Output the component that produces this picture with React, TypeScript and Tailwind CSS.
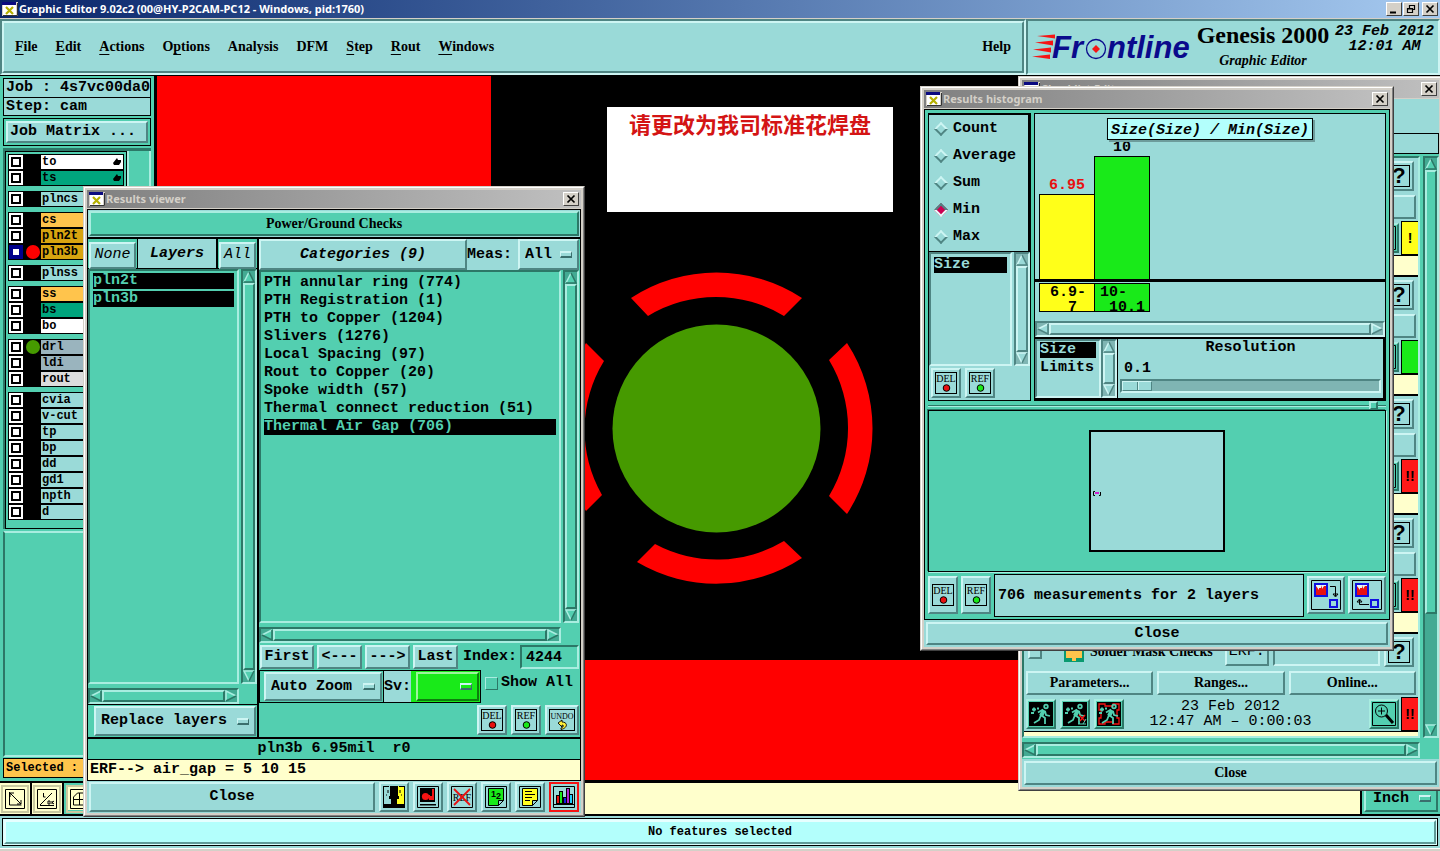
import React from "react";

const MONO = "font-['Liberation_Mono',monospace] font-bold text-[15px] leading-[18px]";
const MONO_SM = "font-['Liberation_Mono',monospace] font-bold text-xs leading-[14px]";
const SERIF = "font-['Liberation_Serif',serif] font-bold text-sm leading-[18px]";

const AQUA_UP = "bg-[#9adad8] border-2 border-t-[#cdf5f3] border-l-[#cdf5f3] border-r-[#4f8583] border-b-[#4f8583]";
const AQUA_IN = "bg-[#9adad8] border-2 border-t-[#4f8583] border-l-[#4f8583] border-r-[#cdf5f3] border-b-[#cdf5f3]";
const TEAL_UP = "bg-[#53cfb0] border-2 border-t-[#a9ede0] border-l-[#a9ede0] border-r-[#2c7867] border-b-[#2c7867]";
const TEAL_IN = "bg-[#53cfb0] border-2 border-t-[#2c7867] border-l-[#2c7867] border-r-[#a9ede0] border-b-[#a9ede0]";
const GREEN_UP = "bg-[#19ea19] border-2 border-t-[#9df59d] border-l-[#9df59d] border-r-[#0d7f0d] border-b-[#0d7f0d]";

type Tone = "aqua" | "teal";
type Dir = "up" | "down" | "left" | "right";

function Arrow({ dir, tone }: { dir: Dir; tone: Tone }) {
  const hi = tone === "aqua" ? "#cdf5f3" : "#a9ede0";
  const lo = tone === "aqua" ? "#4f8583" : "#2c7867";
  const fill = tone === "aqua" ? "#9adad8" : "#53cfb0";
  const lines = {
    up: ["6,1 1,11", "6,1 11,11 1,11", "6,1 11,11 1,11"],
    down: ["11,1 1,1 6,11", "11,1 6,11", "1,1 11,1 6,11"],
    left: ["11,1 1,6", "1,6 11,11 11,1", "11,1 11,11 1,6"],
    right: ["1,11 1,1 11,6", "1,11 11,6", "1,1 11,6 1,11"],
  }[dir];
  return (
    <svg viewBox="0 0 12 12" className="size-3 shrink-0" aria-hidden="true">
      <polygon points={lines[2]} fill={fill} />
      <polyline points={lines[0]} fill="none" stroke={hi} strokeWidth="1.6" />
      <polyline points={lines[1]} fill="none" stroke={lo} strokeWidth="1.6" />
    </svg>
  );
}

function Scroll({ axis, tone, rest = false }: { axis: "x" | "y"; tone: Tone; rest?: boolean }) {
  const shell = tone === "aqua" ? AQUA_IN : TEAL_IN;
  const thumb = tone === "aqua" ? AQUA_UP : TEAL_UP;
  const trough = tone === "aqua" ? "bg-[#7fb5b3]" : "bg-[#43aa93]";
  const dir = axis === "y" ? "w-4 flex-col" : "h-4 flex-row";
  return (
    <div className={`flex shrink-0 ${dir} ${shell}`} aria-hidden="true">
      <div className={`flex min-h-0 min-w-0 flex-1 ${axis === "y" ? "flex-col" : "flex-row"} ${trough}`}>
        <Arrow dir={axis === "y" ? "up" : "left"} tone={tone} />
        <div className={`${rest ? "flex-[4]" : "flex-1"} ${thumb}`} />
        {rest && <div className="flex-1" />}
        <Arrow dir={axis === "y" ? "down" : "right"} tone={tone} />
      </div>
    </div>
  );
}

function AppIcon() {
  return (
    <svg viewBox="0 0 16 14" className="h-3.5 w-4 shrink-0" aria-hidden="true">
      <rect width="16" height="14" fill="#d4d0c8" />
      <rect x="1" y="3" width="13" height="10" fill="#fff" />
      <rect x="0" y="0" width="14" height="3" fill="#0a0a80" />
      <path d="M15.500 1V13.500H1" fill="none" stroke="#333" />
      <path d="M4 5l7 7M11 5l-7 7" stroke="#b5b000" strokeWidth="2.200" />
    </svg>
  );
}

function CaptionButton({ label, kind }: { label: string; kind: "close" | "min" | "restore" }) {
  return (
    <button
      aria-label={label}
      className="flex h-3.5 w-4 items-center justify-center border border-t-white border-l-white border-r-[#404040] border-b-[#404040] bg-[#d4d0c8]"
    >
      <svg viewBox="0 0 12 10" className="h-2.5 w-3" fill="none" stroke="#000">
        {kind === "close" && <path d="M2.500 1.500l7 7M9.500 1.500l-7 7" strokeWidth="1.700" />}
        {kind === "min" && <path d="M2 8.500h6" strokeWidth="2" />}
        {kind === "restore" && <path d="M4.500 4V1.500h5v4H8M4.500 1.500h5M2.500 4.500h5v4h-5zM2.500 5h5" strokeWidth="1.200" />}
      </svg>
    </button>
  );
}

function Frame({ title, className, children }: { title: string; className: string; children: React.ReactNode }) {
  return (
    <section
      className={`absolute flex flex-col border border-t-[#d4d0c8] border-l-[#d4d0c8] border-r-[#404040] border-b-[#404040] ${className}`}
    >
      <div className="flex min-h-0 flex-1 flex-col border border-t-white border-l-white border-r-[#808080] border-b-[#808080] bg-[#d4d0c8] p-0.5">
        <header className="mb-px flex h-[18px] shrink-0 items-center gap-px bg-linear-to-r from-[#808080] to-[#c0c0c0] px-0.5">
          <AppIcon />
          <h2 className="flex-1 font-['Noto_Sans',sans-serif] text-[11px] leading-4 font-bold text-[#d4d0c8]">{title}</h2>
          <CaptionButton label={"Close " + title} kind="close" />
        </header>
        {children}
      </div>
    </section>
  );
}

function OptionMenu({ label, value, bevel = AQUA_UP, className = "" }: { label: string; value: string; bevel?: string; className?: string }) {
  return (
    <span className={`grid items-center ${bevel} ${className}`}>
      <select aria-label={label} className={`col-start-1 row-start-1 w-full appearance-none bg-transparent pl-[5px] outline-none ${MONO}`}>
        <option>{value}</option>
      </select>
      <span className="pointer-events-none col-start-1 row-start-1 mr-[5px] h-[7px] w-3 justify-self-end border-t-2 border-r border-b-2 border-l border-t-[#cdf5f3] border-l-[#cdf5f3] border-r-[#3a6f6d] border-b-[#3a6f6d]" />
    </span>
  );
}

function TagIcon({ text, dot }: { text: string; dot?: string }) {
  const w = text.length > 3 ? 26 : 22;
  return (
    <svg viewBox={`0 0 ${w} 22`} width={w} height="22" className="shrink-0">
      <rect x="0.500" y="0.500" width={w - 1} height="21" fill="none" stroke="#000" />
      <text x={w / 2} y="10" textAnchor="middle" fontFamily="Liberation Serif, serif" fontSize={text.length > 3 ? 8 : 10}>
        {text}
      </text>
      {dot ? (
        <circle cx="11.500" cy="16" r="3.300" fill={dot} stroke="#000" />
      ) : (
        <path d="M9 14l4-3v2c6 0 6 6-1 7.500v-1.500c3-1 3-3 1-3v2z" fill="#ffef3a" stroke="#000" strokeWidth="0.900" />
      )}
    </svg>
  );
}

function IconButton({ label, bevel = AQUA_UP, size = "size-[30px]", children }: { label: string; bevel?: string; size?: string; children: React.ReactNode }) {
  return (
    <button aria-label={label} className={`flex shrink-0 items-center justify-center ${size} ${bevel}`}>
      {children}
    </button>
  );
}

/* ---------- main window ---------- */

const menus: [string, string, string][] = [
  ["", "F", "ile"],
  ["", "E", "dit"],
  ["", "A", "ctions"],
  ["O", "p", "tions"],
  ["Analysis", "", ""],
  ["DFM", "", ""],
  ["", "S", "tep"],
  ["", "R", "out"],
  ["", "W", "indows"],
];

function FrontlineLogo() {
  return (
    <svg viewBox="0 -10 164 48" className="h-12 w-[164px] shrink-0" role="img" aria-label="Frontline">
      <g fill="#f51414">
        <path d="M5 5l18-1.500v4zM3 11.500l18-2v5zM1 18.500l18-2v5zM0 25.500l18-2v4.500z" />
      </g>
      <g fontFamily="Liberation Sans, sans-serif" fontWeight="bold" fontStyle="italic" fontSize="31" fill="#0a0a8c">
        <text x="20" y="27">Fr</text>
        <text x="75" y="27">ntline</text>
      </g>
      <circle cx="64" cy="18" r="9.500" fill="#9adad8" stroke="#0a0a8c" strokeWidth="1.300" />
      <path d="M64 14l4 4-4 4-4-4z" fill="#f51414" />
    </svg>
  );
}

function MenuBar() {
  return (
    <div className="flex h-14 shrink-0 bg-[#9adad8]">
      <div className={`flex min-w-0 flex-1 ${AQUA_IN}`}>
        <nav className={`flex flex-1 items-center gap-[18px] px-[11px] ${AQUA_UP} ${SERIF}`}>
          {menus.map(([a, u, b]) => (
            <button key={a + u + b}>
              {a}
              {u && <span className="underline underline-offset-3">{u}</span>}
              {b}
            </button>
          ))}
          <span className="flex-1" />
          <button>Help</button>
        </nav>
      </div>
      <div className={`flex w-[414px] shrink-0 items-start pl-1 pr-px ${AQUA_IN}`}>
        <div className="flex w-[162px]">
          <FrontlineLogo />
        </div>
        <div className="flex w-[138px] flex-col items-center font-['Liberation_Serif',serif] font-bold">
          <h1 className="text-2xl leading-7">Genesis 2000</h1>
          <p className="mt-1 text-sm leading-4 italic">Graphic Editor</p>
        </div>
        <div className={`flex-1 pt-[3px] text-center italic ${MONO}`}>
          <p className="leading-[15px] whitespace-nowrap">23 Feb 2012</p>
          <p className="leading-[15px]">12:01 AM</p>
        </div>
      </div>
    </div>
  );
}

type Layer = { name: string; bg: string; dot?: string; on?: boolean; hand?: boolean };
const A = "bg-[#9adad8]";
const layerGroups: Layer[][] = [
  [
    { name: "to", bg: "bg-white", hand: true },
    { name: "ts", bg: "bg-[#00a57d]", hand: true },
  ],
  [{ name: "plncs", bg: A }],
  [
    { name: "cs", bg: "bg-[#ffc44c]" },
    { name: "pln2t", bg: "bg-[#d8a410]" },
    { name: "pln3b", bg: "bg-[#d8a410]", dot: "bg-[#ff0000]", on: true },
  ],
  [{ name: "plnss", bg: A }],
  [
    { name: "ss", bg: "bg-[#ffc44c]" },
    { name: "bs", bg: "bg-[#00a57d]" },
    { name: "bo", bg: "bg-white" },
  ],
  [
    { name: "drl", bg: "bg-[#9ab4be]", dot: "bg-[#469a00]" },
    { name: "ldi", bg: "bg-[#9ab4be]" },
    { name: "rout", bg: "bg-[#dcdcdc]" },
  ],
  ["cvia", "v-cut", "tp", "bp", "dd", "gd1", "npth", "d"].map((name) => ({ name, bg: A })),
];

function LayerRow({ layer }: { layer: Layer }) {
  return (
    <label className="flex h-4 items-center bg-black">
      <input
        type="checkbox"
        className={`m-px size-3.5 shrink-0 appearance-none border-2 bg-white outline-2 -outline-offset-4 ${
          layer.on ? "border-[#00008c] outline-[#00008c]" : "border-white outline-black"
        }`}
      />
      <span className="flex w-[17px] shrink-0 justify-center">
        {layer.dot && <span className={`size-3.5 shrink-0 rounded-full ${layer.dot}`} />}
      </span>
      <span className={`mr-px flex h-3.5 flex-1 items-center justify-between pl-px pr-0.5 ${layer.bg} ${MONO_SM}`}>
        {layer.name}
        {layer.hand && (
          <svg viewBox="0 0 8 8" className="size-2" aria-hidden="true">
            <path d="M0 5l4-5 1 2h3v2l-2 3H1z" fill="#000" />
          </svg>
        )}
      </span>
    </label>
  );
}

function LeftPanel() {
  return (
    <aside className="flex w-[156px] shrink-0 flex-col border-r-2 border-black bg-[#53cfb0] px-[3px] pt-0.5">
      <p className={`h-5 border border-black ${A} pl-0.5 whitespace-nowrap ${MONO}`}>Job : 4s7vc00da0</p>
      <p className={`-mt-px h-[19px] border border-black ${A} pl-0.5 ${MONO}`}>Step: cam</p>
      <div className="mt-0.5 h-7 border border-black p-[2px]">
        <button className={`flex h-full w-full items-center pl-0.5 ${AQUA_UP} ${MONO}`}>Job Matrix ...</button>
      </div>
      <div className="mt-0.5 flex border-t-[3px] border-l-2 border-[#2c7867]">
        <div className="flex w-[122px] flex-col gap-[5px] border border-black p-0.5 pb-2">
          {layerGroups.map((g) => (
            <div key={g[0].name} className="flex flex-col">
              {g.map((l) => (
                <LayerRow key={l.name} layer={l} />
              ))}
            </div>
          ))}
        </div>
        <div className="flex-1 border-x-2 border-[#a9ede0]" />
      </div>
      <div className="mt-0.5 flex-1 border-y-2 border-l-2 border-t-[#a9ede0] border-l-[#2c7867] border-b-[#a9ede0]" />
      <p className={`mt-px mb-[3px] flex h-5 items-center border border-black bg-[#ffc44c] pl-0.5 ${MONO_SM}`}>Selected :</p>
    </aside>
  );
}

function Canvas() {
  return (
    <main className="relative min-w-0 flex-1 overflow-hidden bg-black">
      <svg viewBox="156 76 1284 705" width="1284" height="705" className="block max-w-none" role="img" aria-label="Thermal pad">
        <path d="M157 76H491V400H157zM157 660H1440V780H157z" fill="#ff0000" />
        <g fill="#ff0000">
          <path d="M631 298A156 156 0 0 1 802 298L784 316A131 131 0 0 0 648 316z" />
          <path d="M847 343A156 156 0 0 1 847 514L829 496A131 131 0 0 0 829 360z" />
          <path d="M802 558A156 156 0 0 1 637 562L655 544A131 131 0 0 0 784 541z" />
          <path d="M586 343L604 361A131 131 0 0 0 602 495L586 511A156 156 0 0 1 586 343z" />
        </g>
        <circle cx="716.500" cy="428.500" r="104" fill="#469a00" />
      </svg>
      <p className="absolute top-[31px] left-[451px] h-[105px] w-[286px] bg-white pt-0.5 pl-[22px] font-['Noto_Sans_CJK_SC',sans-serif] text-[22px] leading-7 font-bold whitespace-nowrap text-[#d41414]">
        请更改为我司标准花焊盘
      </p>
    </main>
  );
}

function ToolRow() {
  const tool = "flex h-full w-8 shrink-0 items-center justify-center border-r-2 border-black bg-[#ffffcc]";
  const svg = { viewBox: "0 0 20 20", className: "size-5 outline-2 outline-offset-2 outline-[#c9c9a0]", fill: "none", stroke: "#000" };
  return (
    <div className="flex h-[35px] shrink-0 border-y-2 border-black bg-[#ffffcc]">
      <button aria-label="Scale" className={tool}>
        <svg {...svg}>
          <path d="M0.500 0.500h19v19h-19zM4.500 3v13h12M5 4l11 11M5 8V4h4M16 11v4h-4" />
        </svg>
      </button>
      <button aria-label="Angle" className={tool}>
        <svg {...svg}>
          <path d="M0.500 0.500h19v19h-19zM3 16.500h14M3 16L15 4M6.500 4v4h2M11 12h2v3h-2zM15 12v3M17 12l-2 1.500 2 1.500" />
        </svg>
      </button>
      <button aria-label="Grid" className="flex h-full w-8 shrink-0 items-center justify-center border-4 border-[#53cfb0] bg-[#ffffcc]">
        <svg {...svg}>
          <path d="M0.500 0.500h19v19h-19zM3.500 8l4-4h9v12h-13zM9.500 4v12M3 10.500h14" />
        </svg>
      </button>
      <span className="flex-1" />
      <div className="w-[80px] border-l-2 border-black bg-[#53cfb0] p-0.5">
        <OptionMenu label="Units" value="Inch" bevel={TEAL_UP} className="h-[27px] pl-0.5" />
      </div>
    </div>
  );
}

/* ---------- results viewer ---------- */

const categories = [
  "PTH annular ring (774)",
  "PTH Registration (1)",
  "PTH to Copper (1204)",
  "Slivers (1276)",
  "Local Spacing (97)",
  "Rout to Copper (20)",
  "Spoke width (57)",
  "Thermal connect reduction (51)",
  "Thermal Air Gap (706)",
];

function Option({ text, selected, ink = "text-[#53cfb0]" }: { text: string; selected: boolean; ink?: string }) {
  return (
    <button
      role="option"
      aria-selected={selected}
      className={`mb-0.5 block h-4 w-full text-left whitespace-nowrap ${MONO} ${selected ? `bg-black ${ink}` : ""}`}
    >
      <span className="block leading-4">{text}</span>
    </button>
  );
}

function ResultsViewer() {
  const nav = `h-6 ${AQUA_UP} ${MONO}`;
  const header = `h-full w-full italic ${AQUA_UP} font-['Liberation_Mono',monospace] text-[15px] leading-[18px]`;
  return (
    <Frame title="Results viewer" className="top-[186px] left-[83px] h-[631px] w-[502px]">
      <div className="flex min-h-0 flex-1 flex-col border-x border-t border-black bg-[#53cfb0]">
        <div className="h-[29px] border-b-2 border-black bg-[#9adad8] p-px">
          <h3 className={`flex h-full items-center justify-center ${TEAL_UP} ${SERIF}`}>Power/Ground Checks</h3>
        </div>
        <div className="flex min-h-0 flex-1 border-b-2 border-black">
          <div className="flex w-[171px] shrink-0 flex-col border-r-2 border-black">
            <div className="flex h-[30px] shrink-0 border-b border-black">
              <span className="w-[50px] border-r border-black p-px">
                <button className={header}>None</button>
              </span>
              <span className={`flex flex-1 items-center justify-center italic ${A} ${MONO}`}>Layers</span>
              <span className="w-[41px] border-l-2 border-black p-px">
                <button className={header}>All</button>
              </span>
            </div>
            <div className="mb-1 flex min-h-0 flex-1 gap-0.5">
              <div role="listbox" aria-label="Layers" className={`flex-1 px-[3px] pt-0.5 ${TEAL_IN}`}>
                <Option text="pln2t" selected />
                <Option text="pln3b" selected />
              </div>
              <Scroll axis="y" tone="teal" />
            </div>
            <div className="mr-[18px] grid">
              <Scroll axis="x" tone="teal" />
            </div>
            <div className="h-[33px] shrink-0 border-t border-black p-px pl-1.5">
              <OptionMenu label="Layer mode" value="Replace layers" className="h-[30px]" />
            </div>
          </div>
          <div className="flex min-w-0 flex-1 flex-col pr-px">
            <div className="flex h-[31px] shrink-0 bg-[#9adad8]">
              <button className={`w-[208px] shrink-0 italic ${AQUA_UP} ${MONO}`}>Categories (9)</button>
              <span className={`flex flex-1 items-center ${MONO}`}>Meas:</span>
              <OptionMenu label="Measurements" value="All" className="w-[61px]" />
            </div>
            <div className="mb-1 flex min-h-0 flex-1 gap-0.5">
              <div role="listbox" aria-label="Categories" className={`min-w-0 flex-1 px-[3px] pt-[3px] ${TEAL_IN}`}>
                {categories.map((c, i) => (
                  <Option key={c} text={c} selected={i === 8} />
                ))}
              </div>
              <Scroll axis="y" tone="teal" />
            </div>
            <div className="mr-[18px] grid">
              <Scroll axis="x" tone="teal" />
            </div>
            <div className="mt-px flex h-[26px] shrink-0 items-center gap-[3px] pl-px">
              <button className={`w-[54px] ${nav}`}>First</button>
              <button className={`w-[45px] ${nav}`}>&lt;---</button>
              <button className={`w-[45px] ${nav}`}>---&gt;</button>
              <button className={`w-[45px] ${nav}`}>Last</button>
              <label htmlFor="index" className={`ml-0.5 ${MONO}`}>
                Index:
              </label>
              <input id="index" defaultValue="4244" className={`h-6 min-w-0 flex-1 pl-1 outline-none ${TEAL_IN} ${MONO}`} />
            </div>
            <div className="flex h-[33px] shrink-0 items-start">
              <div className="h-full w-[125px] border border-black p-px pl-1">
                <OptionMenu label="Zoom mode" value="Auto Zoom" className="h-full" />
              </div>
              <div className="-ml-px flex h-full w-[98px] border border-black bg-[#19ea19]">
                <span className={`flex items-center ${A} ${MONO}`}>Sv:</span>
                <OptionMenu label="Severity" value="" bevel={GREEN_UP} className="m-px ml-[5px] flex-1" />
              </div>
              <label className={`mt-1 ml-1 flex items-center gap-[3px] whitespace-nowrap ${MONO}`}>
                <input type="checkbox" className="size-[13px] appearance-none border border-t-[#a9ede0] border-l-[#a9ede0] border-r-[#2c7867] border-b-[#2c7867] bg-[#53cfb0]" />
                Show All
              </label>
            </div>
            <div className="flex h-[34px] shrink-0 items-center justify-end gap-1">
              <IconButton label="Delete">
                <TagIcon text="DEL" dot="#e81010" />
              </IconButton>
              <IconButton label="Reference">
                <TagIcon text="REF" dot="#19ea19" />
              </IconButton>
              <IconButton label="Undo" size="h-[30px] w-[34px]">
                <TagIcon text="UNDO" />
              </IconButton>
            </div>
          </div>
        </div>
        <p className={`h-[21px] border-b border-black pt-px text-center whitespace-pre ${MONO}`}>pln3b 6.95mil  r0</p>
        <p className={`h-[21px] border-b border-black bg-[#ffffcc] pt-px pl-0.5 ${MONO}`}>ERF--&gt; air_gap = 5 10 15</p>
      </div>
      <div className="flex h-8 shrink-0 items-center gap-1 bg-[#9adad8] px-0.5">
        <button className={`h-[30px] flex-1 ${AQUA_UP} ${MONO}`}>Close</button>
        <IconButton label="Highlight">
          <svg viewBox="0 0 22 22" className="size-[22px]">
            <rect width="11" height="22" fill="#9adad8" />
            <rect x="11" width="11" height="22" fill="#ffff20" />
            <path d="M0.500 0v22M21.500 0v22M0 0.500h6M22 0.500h-6M5 4v3M17 4v3M3 9h1M18 9h1" stroke="#000" />
            <path d="M7 0h8v10h1v3h-2v5h8v4H0v-4h8v-5H6v-3h1z" fill="#000" />
            <path d="M14 13h2v4h-2z" fill="#ffff20" />
          </svg>
        </IconButton>
        <IconButton label="Record">
          <svg viewBox="0 0 22 22" className="size-[22px]">
            <path d="M0.500 0.500h21v21h-21z" fill="none" stroke="#000" />
            <path d="M3 2h15v14H3zM3 18h16v1.500H3z" fill="#000" />
            <circle cx="8.500" cy="10.500" r="3.600" fill="#f51414" />
            <path d="M11 9h2v1h2V3h2v11h-5z" fill="#f51414" />
          </svg>
        </IconButton>
        <IconButton label="Clear reference">
          <svg viewBox="0 0 22 22" className="size-[22px]">
            <path d="M0.500 0.500h21v21h-21z" fill="none" stroke="#000" />
            <text x="11" y="15" textAnchor="middle" fontFamily="Liberation Serif, serif" fontSize="10">REF</text>
            <path d="M3 3l16 16M19 3L3 19" stroke="#e81010" strokeWidth="1.800" />
          </svg>
        </IconButton>
        <IconButton label="Numbering">
          <svg viewBox="0 0 22 22" className="size-[22px]">
            <path d="M0.500 0.500h21v21h-21z" fill="none" stroke="#000" />
            <path d="M3.500 2.500h15v12l-5 5h-10zM18.500 14.500h-5v5" fill="#19ea19" stroke="#000" />
            <text x="8.500" y="11" textAnchor="middle" fontFamily="Liberation Sans, sans-serif" fontWeight="bold" fontSize="9">1</text>
            <text x="13.500" y="13" textAnchor="middle" fontFamily="Liberation Sans, sans-serif" fontWeight="bold" fontSize="9">2</text>
          </svg>
        </IconButton>
        <IconButton label="Report">
          <svg viewBox="0 0 22 22" className="size-[22px]">
            <path d="M0.500 0.500h21v21h-21z" fill="none" stroke="#000" />
            <path d="M3.500 2.500h15v12l-5 5h-10zM18.500 14.500h-5v5" fill="#ffff20" stroke="#000" />
            <path d="M6 5.500h7M6 8.500h10M6 11.500h7M6 14.500h5" stroke="#000" />
          </svg>
        </IconButton>
        <IconButton label="Histogram" bevel="bg-[#9adad8] border-2 border-[#f51414]">
          <svg viewBox="0 0 22 22" className="size-[22px]" stroke="#000">
            <path d="M0.500 0.500h21v21h-21z" fill="none" />
            <rect x="3.500" y="9.500" width="3" height="8" fill="#e81010" />
            <rect x="6.500" y="5.500" width="3" height="12" fill="#19ea19" />
            <rect x="10.500" y="11.500" width="3" height="6" fill="#1020e0" />
            <rect x="13.500" y="2.500" width="3" height="15" fill="#b020d0" />
            <rect x="16.500" y="8.500" width="3" height="9" fill="#20d0ff" />
            <path d="M1 18.500h20" />
          </svg>
        </IconButton>
      </div>
    </Frame>
  );
}

/* ---------- histogram ---------- */

const bars = [
  { value: "6.95", range: "6.9-\n  7", height: 85, bg: "bg-[#ffff19]", ink: "text-[#e81010]", pad: "pl-2.5" },
  { value: "10", range: "10-\n 10.1", height: 123, bg: "bg-[#19ea19]", ink: "text-black", pad: "pl-[5px]" },
];

function SwapIcon({ flip = false }: { flip?: boolean }) {
  return (
    <svg viewBox="0 0 30 30" className="size-[30px] shrink-0" fill="none">
      <path d="M0.500 0.500h29v29h-29z" stroke="#000" />
      <rect x="4" y="4" width="12" height="12" fill="#e6fbfa" stroke="#1010e0" strokeWidth="2" />
      <path d="M5 15V6l3 4V8h2l1-3v4l2-3h2v9z" fill="#e81010" />
      <rect x="19" y="20" width="7" height="7" stroke="#1010e0" strokeWidth="2" />
      {flip ? <path d="M7.500 20v4.500H17M5 22l2.500-3 2.500 3z" stroke="#000" /> : <path d="M19 6.500h5.500V16M22 14h5l-2.500 3z" stroke="#000" />}
    </svg>
  );
}

function Histogram() {
  return (
    <Frame title="Results histogram" className="top-[86px] left-[920px] h-[565px] w-[474px]">
      <div className="flex min-h-0 flex-1 flex-col border border-black bg-[#53cfb0] px-[3px] pt-[3px]">
        <div className="flex h-[288px] shrink-0 gap-[3px]">
          <div className="flex w-[103px] shrink-0 flex-col border border-black bg-[#9adad8]">
            <fieldset className="flex h-[138px] flex-col gap-[9px] border-t border-r-2 border-b border-black pt-[5px] pl-[7px]">
              {["Count", "Average", "Sum", "Min", "Max"].map((r) => (
                <label key={r} className={`flex items-center gap-[7px] ${MONO}`}>
                  <input
                    type="radio"
                    name="measure"
                    defaultChecked={r === "Min"}
                    className="size-[10px] shrink-0 rotate-45 appearance-none border-2 border-t-[#cdf5f3] border-l-[#cdf5f3] border-r-[#4f8583] border-b-[#4f8583] checked:border-t-[#4f8583] checked:border-l-[#4f8583] checked:border-r-[#e6fbfa] checked:border-b-[#e6fbfa] checked:bg-[#cc0052]"
                  />
                  {r}
                </label>
              ))}
            </fieldset>
            <div className="flex min-h-0 flex-1 gap-0.5">
              <div role="listbox" aria-label="Values" className={`flex-1 px-[3px] pt-[3px] ${AQUA_IN}`}>
                <Option text="Size" selected ink="text-[#9adad8]" />
              </div>
              <Scroll axis="y" tone="aqua" />
            </div>
            <div className="flex h-[34px] shrink-0 items-center gap-1 pl-0.5">
              <IconButton label="Delete value">
                <TagIcon text="DEL" dot="#e81010" />
              </IconButton>
              <IconButton label="Reference value">
                <TagIcon text="REF" dot="#19ea19" />
              </IconButton>
            </div>
          </div>
          <div className="flex min-w-0 flex-1 flex-col border border-black bg-[#9adad8]">
            <div className="relative flex flex-1 items-end border-b-[3px] border-black pl-1">
              {bars.map((b) => (
                <div key={b.value} className={`-mr-px w-14 text-center ${MONO} ${b.ink}`}>
                  <div className="leading-4">{b.value}</div>
                  <div className={`border border-b-0 border-black ${b.bg}`} style={{ height: b.height }} />
                </div>
              ))}
              <h3 className={`absolute top-1 left-1/2 h-[22px] -translate-x-1/2 border border-black bg-[#b3fffc] px-[3px] pt-[3px] whitespace-nowrap italic shadow-[2px_2px_0_#6d9c9b] ${MONO}`}>
                Size(Size) / Min(Size)
              </h3>
            </div>
            <div className="flex h-[39px] shrink-0 items-start pt-px pl-1">
              {bars.map((b) => (
                <p key={b.value} className={`-mr-px h-[29px] w-14 border border-black whitespace-pre ${b.bg} ${b.pad} ${MONO}`}>
                  <span className="block pt-px leading-[15px]">{b.range}</span>
                </p>
              ))}
            </div>
            <div className="grid shrink-0">
              <Scroll axis="x" tone="aqua" />
            </div>
            <div className="flex h-[63px] shrink-0 border-t-2 border-r-2 border-b-2 border-black">
              <div role="listbox" aria-label="Axis" className={`w-[66px] px-[3px] pt-px ${AQUA_IN}`}>
                <Option text="Size" selected ink="text-[#9adad8]" />
                <Option text="Limits" selected={false} />
              </div>
              <Scroll axis="y" tone="aqua" />
              <div className={`flex min-w-0 flex-1 flex-col border-l border-black px-0.5 ${MONO}`}>
                <label htmlFor="resolution" className="text-center">
                  Resolution
                </label>
                <output htmlFor="resolution" className="mt-0.5 pl-1 leading-5">0.1</output>
                <input
                  id="resolution"
                  type="range"
                  defaultValue={0}
                  className="h-3.5 w-full appearance-none border-2 border-t-[#4f8583] border-l-[#4f8583] border-r-[#cdf5f3] border-b-[#cdf5f3] bg-[#7fb5b3] [&::-webkit-slider-thumb]:h-2.5 [&::-webkit-slider-thumb]:w-[30px] [&::-webkit-slider-thumb]:appearance-none [&::-webkit-slider-thumb]:border [&::-webkit-slider-thumb]:border-t-[#cdf5f3] [&::-webkit-slider-thumb]:border-l-[#cdf5f3] [&::-webkit-slider-thumb]:border-r-[#4f8583] [&::-webkit-slider-thumb]:border-b-[#4f8583] [&::-webkit-slider-thumb]:bg-[linear-gradient(to_right,#9adad8_14px,#4f8583_14px,#4f8583_15px,#cdf5f3_15px,#cdf5f3_16px,#9adad8_16px)]"
                />
              </div>
            </div>
          </div>
        </div>
        <div className="flex h-[9px] shrink-0 items-center">
          <span className="h-0.5 flex-1 border-t border-b border-t-[#2c7867] border-b-[#a9ede0]" />
          <span className={`size-[9px] ${TEAL_UP}`} />
          <span className="h-0.5 w-2 border-t border-b border-t-[#2c7867] border-b-[#a9ede0]" />
        </div>
        <div className="flex min-h-0 flex-1 items-center justify-center border border-black shadow-[1px_1px_0_#a9ede0,-1px_-1px_0_#2c7867]">
          <div className="flex h-[122px] w-[136px] items-center border-2 border-black bg-[#9adad8] pt-1 pl-0.5">
            <svg viewBox="0 0 8 5" className="h-[5px] w-2" aria-hidden="true">
              <path d="M2 .5H.5V4.500H2M6 4.500h1.500V1" fill="none" stroke="#000" />
              <rect x="2" y="1" width="4" height="2" fill="#d020d0" />
            </svg>
          </div>
        </div>
        <div className="my-0.5 flex h-[43px] shrink-0 gap-[3px]">
          <IconButton label="Delete measurement" size="h-[38px] w-[30px] mt-0.5">
            <TagIcon text="DEL" dot="#e81010" />
          </IconButton>
          <IconButton label="Reference measurement" size="h-[38px] w-[30px] mt-0.5">
            <TagIcon text="REF" dot="#19ea19" />
          </IconButton>
          <p className={`flex flex-1 items-center border border-black ${A} pl-[3px] ${MONO}`}>706 measurements for 2 layers</p>
          <IconButton label="Move to layer" size="size-[38px] mt-0.5">
            <SwapIcon />
          </IconButton>
          <IconButton label="Move back" size="size-[38px] mt-0.5">
            <SwapIcon flip />
          </IconButton>
        </div>
      </div>
      <div className="flex shrink-0 bg-[#9adad8] p-0.5">
        <button className={`h-[23px] w-full leading-none ${AQUA_UP} ${MONO}`}>Close</button>
      </div>
    </Frame>
  );
}

/* ---------- checklist ---------- */

function Runner({ variant }: { variant: 0 | 1 | 2 }) {
  return (
    <svg viewBox="0 0 24 24" className="size-6 shrink-0" fill="none">
      <rect width="24" height="24" fill="#000" />
      {variant === 2 && <path d="M2 2h6v2h8V2h6v6h-2v8h2v6h-6v-2H8v2H2v-6h2V8H2z" stroke="#f51414" strokeWidth="1.300" />}
      <g stroke="#53cfb0" strokeWidth="1.800">
        <circle cx="17" cy="4.500" r="1.800" />
        <path d="M12 13l-2 5-5 3M14 7.500l-5 3M16 9l1 4 4 1M12 13l4 3v6M3 7.500h4M2 11h3M8 6.500h2M5 5.500v4" />
        <path d="M15 8l-3 6" strokeWidth="4" />
      </g>
      {variant === 1 && <path d="M16 13l6 6M22 13l-5 6" stroke="#f51414" strokeWidth="1.300" />}
      {variant === 1 && <path d="M15 22h8M20 22l3-5" stroke="#53cfb0" />}
    </svg>
  );
}

const checks = [
  { mark: "!", bg: "bg-[#ffff19]" },
  { mark: "", bg: "bg-[#19ea19]" },
  { mark: "!!", bg: "bg-[#ff1919]" },
  { mark: "!!", bg: "bg-[#ff1919]" },
  { mark: "!!", bg: "bg-[#ff1919]", full: true },
];

function CheckItem({ mark, bg, full }: { mark: string; bg: string; full?: boolean }) {
  const btn = `h-6 flex-1 ${AQUA_UP} ${SERIF}`;
  return (
    <li className="flex h-[119px] shrink-0 flex-col border-b-2 border-black bg-[#9adad8]">
      <div className="flex h-9 shrink-0 items-center gap-1 px-1">
        {full && (
          <>
            <input type="checkbox" aria-label="Run Solder Mask Checks" className={`size-3.5 appearance-none ${AQUA_UP}`} />
            <svg viewBox="0 0 20 20" className="ml-[18px] size-5" aria-hidden="true">
              <rect width="20" height="20" fill="#0a9a70" />
              <path d="M2 8h4V4h12v12H12v3H8v-3H2z" fill="#ffc44c" />
            </svg>
            <span className={`ml-0.5 ${SERIF}`}>Solder Mask Checks</span>
            <button className={`ml-2 h-7 w-11 ${AQUA_UP} font-['Liberation_Mono',monospace] text-[15px]`}>ERF:</button>
            <input aria-label="ERF model" defaultValue="*" className={`h-7 min-w-0 flex-1 outline-none ${AQUA_IN} font-['Liberation_Mono',monospace] text-[15px]`} />
          </>
        )}
        <span className="ml-auto">
          <IconButton label="Help on check">
            <span className="flex size-[22px] items-center justify-center border border-black font-['Liberation_Sans',sans-serif] text-[22px] leading-5 font-bold">?</span>
          </IconButton>
        </span>
      </div>
      <div className="flex h-[26px] shrink-0 items-center gap-1 pr-0.5 pl-0.5">
        <button className={btn}>{full ? "Parameters..." : ""}</button>
        <button className={btn}>{full ? "Ranges..." : ""}</button>
        <button className={btn}>{full ? "Online..." : ""}</button>
      </div>
      <div className="flex h-[35px] shrink-0 items-center gap-1 pl-0.5">
        {full && (
          <>
            <IconButton label="Run" bevel={TEAL_UP}>
              <Runner variant={0} />
            </IconButton>
            <IconButton label="Run on selection" bevel={TEAL_UP}>
              <Runner variant={1} />
            </IconButton>
            <IconButton label="Run in profile" bevel={TEAL_UP}>
              <Runner variant={2} />
            </IconButton>
            <p className="mr-8 flex-1 text-center font-['Liberation_Mono',monospace] text-[15px] leading-[15px] whitespace-nowrap">
              23 Feb 2012
              <br />
              12:47 AM – 0:00:03
            </p>
          </>
        )}
        <span className="ml-auto">
          <IconButton label="View results" bevel={TEAL_UP}>
            <svg viewBox="0 0 24 24" className="size-6 shrink-0" fill="none" stroke="#000">
              <path d="M0.500 0.500h23v23h-23z" />
              <circle cx="9.500" cy="9" r="6" />
              <path d="M6 9h7M9.500 5.500v7" />
              <path d="M14 13l7 8" strokeWidth="3" />
            </svg>
          </IconButton>
        </span>
        <span className={`-ml-0.5 flex h-[34px] w-[17px] items-center justify-center border border-r-0 border-black font-['Liberation_Sans',sans-serif] text-sm font-bold ${bg}`}>{mark}</span>
      </div>
      <div className="flex-1 border-t border-black bg-[#ffffcc]" />
    </li>
  );
}

function Checklist() {
  return (
    <Frame title="Checklist Editor" className="top-[76px] -right-[3px] h-[715px] w-[425px]">
      <div className="flex min-h-0 flex-1 flex-col bg-[#53cfb0]">
        <div className="h-[55px] shrink-0 border-b border-black bg-[#9adad8] pt-[34px]">
          <div className="h-5 border border-b-0 border-black" />
        </div>
        <div className="mt-0.5 mb-1 flex min-h-0 flex-1 gap-[3px]">
          <ul className={`flex min-w-0 flex-1 flex-col overflow-hidden ${TEAL_IN}`}>
            {checks.map((c, i) => (
              <CheckItem key={i} {...c} />
            ))}
          </ul>
          <Scroll axis="y" tone="teal" rest />
        </div>
        <div className="mr-[19px] grid">
          <Scroll axis="x" tone="teal" />
        </div>
        <div className="mt-px flex bg-[#9adad8] p-0.5">
          <button className={`h-6 w-full ${AQUA_UP} ${SERIF}`}>Close</button>
        </div>
      </div>
    </Frame>
  );
}

export default function App() {
  return (
    <div className="relative flex h-screen flex-col overflow-hidden bg-[#53cfb0] text-black">
      <header className="flex h-[19px] shrink-0 items-center gap-px border-b border-[#d4d0c8] bg-linear-to-r from-[#0a246a] to-[#a6caf0] px-0.5">
        <AppIcon />
        <p className="flex-1 font-['Noto_Sans',sans-serif] text-[11px] leading-4 font-bold whitespace-nowrap text-white">
          Graphic Editor 9.02c2 (00@HY-P2CAM-PC12 - Windows, pid:1760)
        </p>
        <CaptionButton label="Minimize" kind="min" />
        <CaptionButton label="Restore" kind="restore" />
        <span className="w-px" />
        <CaptionButton label="Close" kind="close" />
      </header>
      <MenuBar />
      <div className="flex min-h-0 flex-1 border-t border-black">
        <LeftPanel />
        <Canvas />
      </div>
      <ToolRow />
      <footer className="h-8 shrink-0 bg-[#9adad8] p-0.5">
        <div className="h-full border border-black bg-[#d9fffe] p-px">
          <p className={`flex h-full items-center justify-center border-2 border-t-[#e6ffff] border-l-[#e6ffff] border-r-[#5f9a98] border-b-[#5f9a98] bg-[#b3fffc] ${MONO_SM}`}>
            No features selected
          </p>
        </div>
      </footer>
      <div className="h-[3px] shrink-0 border-t border-white bg-[#d4d0c8]" />
      <Checklist />
      <Histogram />
      <ResultsViewer />
    </div>
  );
}
